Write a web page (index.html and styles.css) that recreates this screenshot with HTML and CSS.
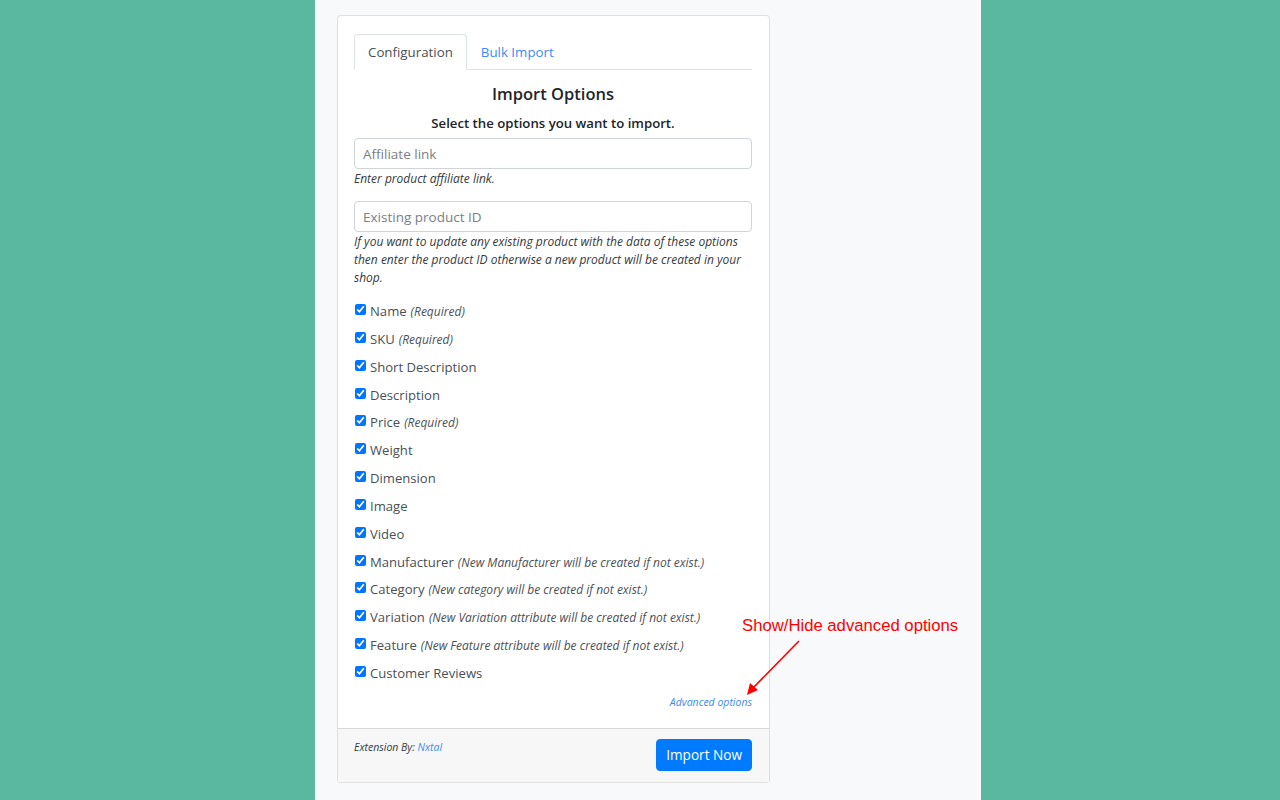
FILE: index.html
```html
<!DOCTYPE html>
<html lang="en">
  <head>
    <meta charset="UTF-8" />
    <meta name="viewport" content="width=device-width, initial-scale=1.0" />
    <title>Import Options</title>
    <link rel="stylesheet" href="styles.css">
  </head>
  <body>
    <div class="panel">
      <div class="card">
        <div class="card-body">
          <ul class="tabs">
            <li class="tab active">Configuration</li>
            <li class="tab">Bulk Import</li>
          </ul>

          <h2 class="title">Import Options</h2>
          <p class="subtitle">Select the options you want to import.</p>

          <input class="field" type="text" placeholder="Affiliate link" />
          <p class="help">Enter product affiliate link.</p>

          <input class="field field-gap" type="text" placeholder="Existing product ID" />
          <p class="help">If you want to update any existing product with the data of these options then enter the product ID otherwise a new product will be created in your shop.</p>

          <ul class="options">
            <li><label><input type="checkbox" checked /> Name <i>(Required)</i></label></li>
            <li><label><input type="checkbox" checked /> SKU <i>(Required)</i></label></li>
            <li><label><input type="checkbox" checked /> Short Description</label></li>
            <li><label><input type="checkbox" checked /> Description</label></li>
            <li><label><input type="checkbox" checked /> Price <i>(Required)</i></label></li>
            <li><label><input type="checkbox" checked /> Weight</label></li>
            <li><label><input type="checkbox" checked /> Dimension</label></li>
            <li><label><input type="checkbox" checked /> Image</label></li>
            <li><label><input type="checkbox" checked /> Video</label></li>
            <li><label><input type="checkbox" checked /> Manufacturer <i>(New Manufacturer will be created if not exist.)</i></label></li>
            <li><label><input type="checkbox" checked /> Category <i>(New category will be created if not exist.)</i></label></li>
            <li><label><input type="checkbox" checked /> Variation <i>(New Variation attribute will be created if not exist.)</i></label></li>
            <li><label><input type="checkbox" checked /> Feature <i>(New Feature attribute will be created if not exist.)</i></label></li>
            <li><label><input type="checkbox" checked /> Customer Reviews</label></li>
          </ul>

          <div class="advanced"><a href="#">Advanced options</a></div>
        </div>
        <div class="card-footer">
          <span class="credit">Extension By: <a href="#">Nxtal</a></span>
          <button type="button" class="btn">Import Now</button>
        </div>
      </div>
    </div>

    <div class="note">Show/Hide advanced options</div>
    <svg class="note-arrow" width="60" height="60" viewBox="0 0 60 60">
      <line x1="55" y1="2" x2="8" y2="50" stroke="#f00" stroke-width="1.6" />
      <polygon points="3,56 6,44 14,51" fill="#f00" />
    </svg>
  </body>
</html>
```

FILE: styles.css
```css
body {
  margin: 0;
  background-color: #5ab8a0;
  font-family: "Open Sans", "Noto Sans", sans-serif;
  color: #495057;
  display: flex;
  min-height: 800px;
}

.panel {
  margin-left: 315px;
  width: 666px;
  background: #f8f9fa;
  padding: 15px 22px 18px;
  box-sizing: border-box;
}

.card {
  width: 433px;
  background: #fff;
  border: 1px solid rgba(0, 0, 0, 0.125);
  border-radius: 4px;
  box-sizing: border-box;
}

.card-body {
  padding: 18px 17px 18px 16px;
}

.tabs {
  list-style: none;
  margin: 0;
  padding: 0;
  display: flex;
  border-bottom: 1px solid #dee2e6;
}

.tab {
  font-size: 13.3px;
  line-height: 20px;
  padding: 7px 13px 7px 13px;
  color: #3b8cf5;
  border: 1px solid transparent;
  border-radius: 4px 4px 0 0;
  margin-bottom: -1px;
}

.tab.active {
  color: #495057;
  border-color: #dee2e6 #dee2e6 #fff;
  background: #fff;
}

.title {
  text-align: center;
  font-size: 16.5px;
  font-weight: 600;
  color: #212529;
  margin: 13px 0 8px;
  line-height: 22px;
}

.subtitle {
  text-align: center;
  font-size: 13.2px;
  font-weight: 600;
  color: #212529;
  margin: 0 0 4px;
  line-height: 21px;
}

.field {
  display: block;
  width: 100%;
  box-sizing: border-box;
  height: 31px;
  padding: 4px 8px;
  font-family: inherit;
  font-size: 13.5px;
  border: 1px solid #ced4da;
  border-radius: 4px;
  color: #495057;
}

.field::placeholder {
  color: #7a8087;
}

.field-gap {
  margin-top: 13px;
}

.help {
  font-size: 12px;
  font-style: italic;
  line-height: 18px;
  color: #343a40;
  margin: 1px 0 0;
}

.options {
  list-style: none;
  margin: 14px 0 0;
  padding: 0;
}

.options li {
  font-size: 13.1px;
  line-height: 21px;
  margin-bottom: 6.85px;
  color: #495057;
}

.options label {
  display: flex;
  align-items: center;
  white-space: nowrap;
}

.options input {
  width: 11px;
  height: 11px;
  margin: 0 4px 0 1px;
  position: relative;
  top: -2px;
}

.options i {
  font-size: 12px;
  margin-left: 4px;
  color: #495057;
}

.advanced {
  text-align: right;
  font-size: 10.5px;
  font-style: italic;
  line-height: 16px;
  margin-top: 10px;
}

a {
  color: #3b8cf5;
  text-decoration: none;
}

.card-footer {
  display: flex;
  justify-content: space-between;
  align-items: flex-start;
  background: #f7f7f7;
  border-top: 1px solid rgba(0, 0, 0, 0.125);
  padding: 10px 17px 11px 16px;
}

.credit {
  font-size: 10.5px;
  font-style: italic;
  color: #343a40;
  line-height: 16px;
}

.btn {
  background: #007bff;
  color: #fff;
  border: 1px solid #007bff;
  border-radius: 4px;
  font-family: inherit;
  font-size: 13.6px;
  height: 32px;
  padding: 0 9px;
}

.note {
  position: absolute;
  left: 742px;
  top: 616px;
  font-family: "Liberation Sans", Arial, sans-serif;
  font-size: 16.7px;
  color: #f00;
}

.note-arrow {
  position: absolute;
  left: 744px;
  top: 639px;
}
```
